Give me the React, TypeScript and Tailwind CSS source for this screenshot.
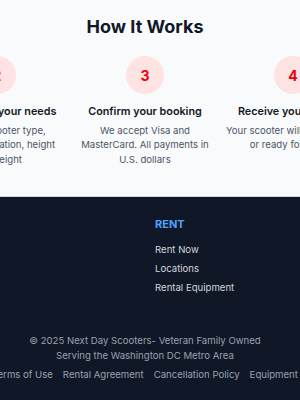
import React from 'react';

// ステップ一覧
const steps = [
  { n: 1, title: 'Pick your dates', text: 'Choose when and where you need your scooter' },
  { n: 2, title: 'Choose for your needs', text: 'Choose scooter type, preferred duration, height and\u00a0weight' },
  { n: 3, title: 'Confirm your booking', text: 'We accept Visa and MasterCard. All payments in U.S. dollars' },
  { n: 4, title: 'Receive your scooter', text: 'Your scooter will be delivered or ready for pickup' },
  { n: 5, title: 'Enjoy your trip', text: 'Return it when you are done and we handle the rest' },
];

const rentLinks = ['Rent Now', 'Locations', 'Rental Equipment'];
const legalLinks = ['Terms of Use', 'Rental Agreement', 'Cancellation Policy', 'Equipment'];

export default function App() {
  return (
    <div className="w-[300px] h-[400px] overflow-hidden font-['Inter',sans-serif]">
      {/* How It Works */}
      <section className="h-[196px] bg-gray-50 pt-[16px]">
        <div className="w-[290px] flex flex-col items-center">
          <h2 className="text-[18px] leading-[22px] font-bold text-gray-900 whitespace-nowrap">How It Works</h2>
          <div className="mt-[18px] flex justify-center gap-[12px]">
            {steps.map(s => (
              <div key={s.n} className="w-[136px] shrink-0 flex flex-col items-center text-center">
                <div className="w-[38px] h-[38px] rounded-full bg-red-100 flex items-center justify-center text-[14px] font-bold text-red-600">
                  {s.n}
                </div>
                <h3 className="mt-[10px] text-[10.8px] leading-[16.8px] font-semibold text-gray-900 whitespace-nowrap">{s.title}</h3>
                <p className="mt-[3px] text-[9.6px] leading-[14.4px] text-gray-600">{s.text}</p>
              </div>
            ))}
          </div>
        </div>
      </section>

      {/* Footer */}
      <footer className="border-t border-gray-300 bg-gray-900 pt-[19px] h-[204px]">
        <div className="w-[290px] grid grid-cols-[155px_1fr]">
          <div></div>
          <div>
            <h4 className="text-[11px] leading-[16px] font-bold text-blue-400">RENT</h4>
            <ul className="mt-[11px] flex flex-col gap-[4.6px]">
              {rentLinks.map(l => (
                <li key={l} className="text-[9.6px] leading-[14.4px] text-gray-300 whitespace-nowrap">{l}</li>
              ))}
            </ul>
          </div>
        </div>
        <div className="w-[290px] mt-[39px] flex flex-col items-center text-[9.6px] leading-[14.4px] text-gray-400">
          <p className="whitespace-nowrap">© 2025 Next Day Scooters- Veteran Family Owned</p>
          <p className="whitespace-nowrap">Serving the Washington DC Metro Area</p>
          <div className="mt-[4.6px] flex justify-center gap-[10px] whitespace-nowrap">
            {legalLinks.map(l => (
              <span key={l}>{l}</span>
            ))}
          </div>
        </div>
      </footer>
    </div>
  );
}
